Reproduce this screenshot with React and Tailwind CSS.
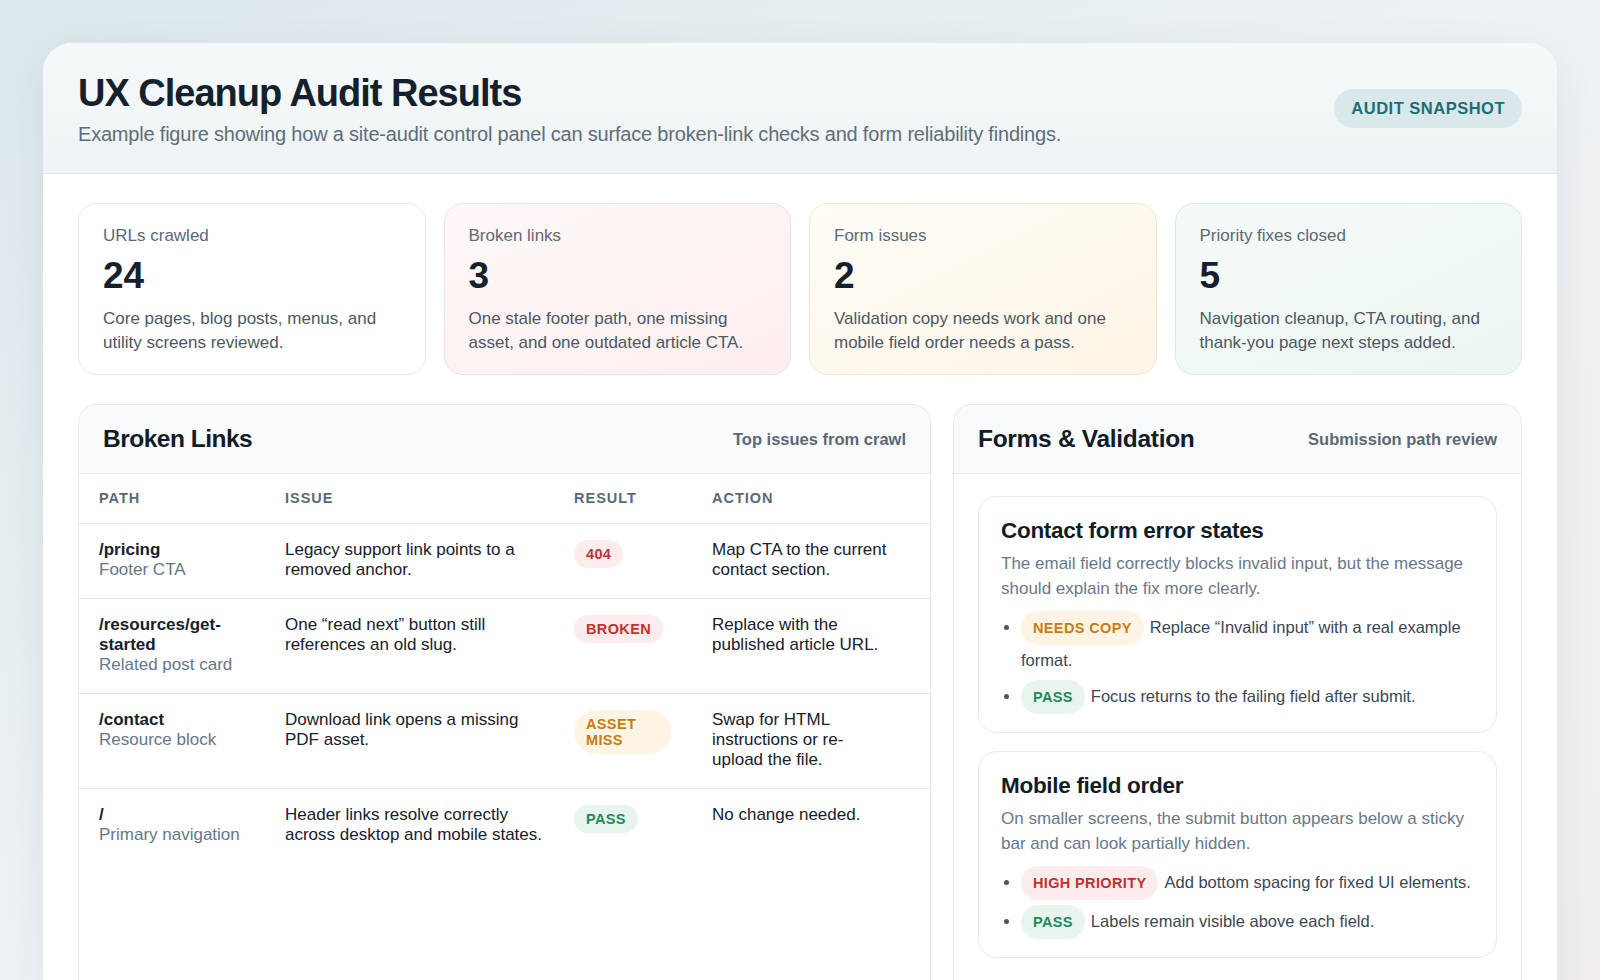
const F = { fontFamily: '"Liberation Sans", Arial, sans-serif' };

const stats = [
  { l: 'URLs crawled', n: '24', d: 'Core pages, blog posts, menus, and utility screens reviewed.', c: 'bg-white border-[#e5e9ee]' },
  { l: 'Broken links', n: '3', d: 'One stale footer path, one missing asset, and one outdated article CTA.', c: 'bg-gradient-to-br from-[#fff8f8] to-[#fdeeee] border-[#f3dede]' },
  { l: 'Form issues', n: '2', d: 'Validation copy needs work and one mobile field order needs a pass.', c: 'bg-gradient-to-br from-[#fffdf7] to-[#fff5e6] border-[#f3e6cf]' },
  { l: 'Priority fixes closed', n: '5', d: 'Navigation cleanup, CTA routing, and thank-you page next steps added.', c: 'bg-gradient-to-br from-[#f5faf8] to-[#ecf6f1] border-[#d9ebe3]' },
];

const pill = {
  red: 'bg-[#fdecec] text-[#c53030]',
  amber: 'bg-[#fff4e3] text-[#c77d12]',
  green: 'bg-[#e7f5ee] text-[#23895a]',
};

const rows = [
  { p: '/pricing', s: 'Footer CTA', i: 'Legacy support link points to a removed anchor.', r: '404', t: 'red', a: 'Map CTA to the current contact section.' },
  { p: '/resources/get-started', s: 'Related post card', i: 'One \u201cread next\u201d button still references an old slug.', r: 'BROKEN', t: 'red', a: 'Replace with the published article URL.' },
  { p: '/contact', s: 'Resource block', i: 'Download link opens a missing PDF asset.', r: 'ASSET MISS', t: 'amber', a: 'Swap for HTML instructions or re-upload the file.' },
  { p: '/', s: 'Primary navigation', i: 'Header links resolve correctly across desktop and mobile states.', r: 'PASS', t: 'green', a: 'No change needed.' },
];

function Tag({ t, children, cls = '' }) {
  return <span className={`inline-block rounded-full font-bold tracking-wide ${pill[t]} ${cls}`}>{children}</span>;
}

function FormCard({ title, desc, items }) {
  return (
    <div className="rounded-[19px] border border-[#e6eaef] bg-white px-[22px] pt-[20px] pb-[18px]">
      <div className="text-[22.5px] leading-[28px] font-bold text-[#111c27] tracking-[-0.3px]">{title}</div>
      <div className="mt-[6px] text-[17px] leading-[25px] text-[#68788a]">{desc}</div>
      <ul className="mt-[10px] list-disc pl-[20px] marker:text-[#4b5563]">
        {items.map((it, k) => (
          <li key={k} className="text-[16.5px] leading-[30px] mt-[5px] text-[#3b4756]">
            <Tag t={it.t} cls="text-[14.5px] leading-[20px] px-[12px] py-[7px] mr-[6px]">{it.tag}</Tag>
            {it.txt}
          </li>
        ))}
      </ul>
    </div>
  );
}

export default function App() {
  return (
    <div style={F} className="h-[980px] w-full bg-gradient-to-br from-[#dce8ec] via-[#eef2f4] to-[#f2eef0] px-[43px] pt-[43px] overflow-hidden">
      <div className="rounded-t-[29px] bg-white shadow-[0_10px_40px_rgba(30,50,70,0.08)] h-[960px] w-full">
        <div className="flex justify-between items-start rounded-t-[29px] bg-gradient-to-b from-[#f6f9fa] to-[#eef3f5] border-b border-[#e3e8ec] px-[35px] pt-[27px] h-[131px]">
          <div>
            <h1 className="text-[38px] leading-[46px] font-bold tracking-[-1px] text-[#14212d]">UX Cleanup Audit Results</h1>
            <p className="mt-[4px] text-[20px] leading-[28px] text-[#5e6d7c] tracking-[-0.2px]">Example figure showing how a site-audit control panel can surface broken-link checks and form reliability findings.</p>
          </div>
          <div className="mt-[19px] rounded-full bg-[#d8e8eb] px-[17px] py-[9px] text-[16.5px] leading-[21px] font-bold tracking-[0.5px] text-[#1b6e79]">AUDIT SNAPSHOT</div>
        </div>

        <div className="px-[35px] pt-[29px]">
          <div className="grid grid-cols-4 gap-[18px]">
            {stats.map((s) => (
              <div key={s.l} className={`rounded-[19px] border px-[24px] pt-[21px] h-[172px] ${s.c}`}>
                <div className="text-[17px] leading-[22px] text-[#5b6977]">{s.l}</div>
                <div className="mt-[8px] text-[37px] leading-[42px] font-bold text-[#14212d]">{s.n}</div>
                <div className="mt-[10px] text-[17px] leading-[23.5px] text-[#4b5866]">{s.d}</div>
              </div>
            ))}
          </div>

          <div className="mt-[29px] grid grid-cols-[853px_1fr] gap-[22px]">
            <div className="rounded-t-[19px] border border-[#e3e8ec] border-b-0 h-[600px]">
              <div className="flex justify-between items-center h-[69px] px-[24px] bg-[#f8fafc] rounded-t-[19px] border-b border-[#e3e8ec]">
                <div className="text-[24.5px] font-bold text-[#111c27] tracking-[-0.5px]">Broken Links</div>
                <div className="text-[16.5px] font-bold text-[#5b6977]">Top issues from crawl</div>
              </div>
              <div className="grid grid-cols-[186px_289px_138px_1fr] h-[50px] items-center px-[20px] border-b border-[#dfe5eb] text-[14.5px] font-bold tracking-[1px] text-[#5b6977]">
                <div>PATH</div><div>ISSUE</div><div>RESULT</div><div>ACTION</div>
              </div>
              {rows.map((r, k) => (
                <div key={k} className={`grid grid-cols-[186px_289px_138px_1fr] px-[20px] pt-[16px] pb-[18px] text-[17px] leading-[20px] text-[#17212c] ${k < 3 ? 'border-b border-[#dfe5eb]' : ''} ${k === 0 ? 'min-h-[73px]' : 'min-h-[93px]'}`}>
                  <div className="pr-[20px]">
                    <div className="font-bold">{r.p}</div>
                    <div className="text-[#66768a]">{r.s}</div>
                  </div>
                  <div className="pr-[20px]">{r.i}</div>
                  <div>
                    <Tag t={r.t} cls={`text-[14.5px] leading-[16px] px-[12px] py-[6px] ${r.r === 'ASSET MISS' ? 'w-[97px]' : ''}`}>{r.r}</Tag>
                  </div>
                  <div className="pr-[20px]">{r.a}</div>
                </div>
              ))}
            </div>

            <div className="rounded-t-[19px] border border-[#e3e8ec] border-b-0 h-[600px]">
              <div className="flex justify-between items-center h-[69px] px-[24px] bg-[#f8fafc] rounded-t-[19px] border-b border-[#e3e8ec]">
                <div className="text-[24.5px] font-bold text-[#111c27] tracking-[-0.3px]">Forms &amp; Validation</div>
                <div className="text-[16.5px] font-bold text-[#5b6977]">Submission path review</div>
              </div>
              <div className="px-[24px] pt-[22px] flex flex-col gap-[18px]">
                <FormCard
                  title="Contact form error states"
                  desc="The email field correctly blocks invalid input, but the message should explain the fix more clearly."
                  items={[
                    { t: 'amber', tag: 'NEEDS COPY', txt: 'Replace \u201cInvalid input\u201d with a real example format.' },
                    { t: 'green', tag: 'PASS', txt: 'Focus returns to the failing field after submit.' },
                  ]}
                />
                <FormCard
                  title="Mobile field order"
                  desc="On smaller screens, the submit button appears below a sticky bar and can look partially hidden."
                  items={[
                    { t: 'red', tag: 'HIGH PRIORITY', txt: 'Add bottom spacing for fixed UI elements.' },
                    { t: 'green', tag: 'PASS', txt: 'Labels remain visible above each field.' },
                  ]}
                />
              </div>
            </div>
          </div>
        </div>
      </div>
    </div>
  );
}
